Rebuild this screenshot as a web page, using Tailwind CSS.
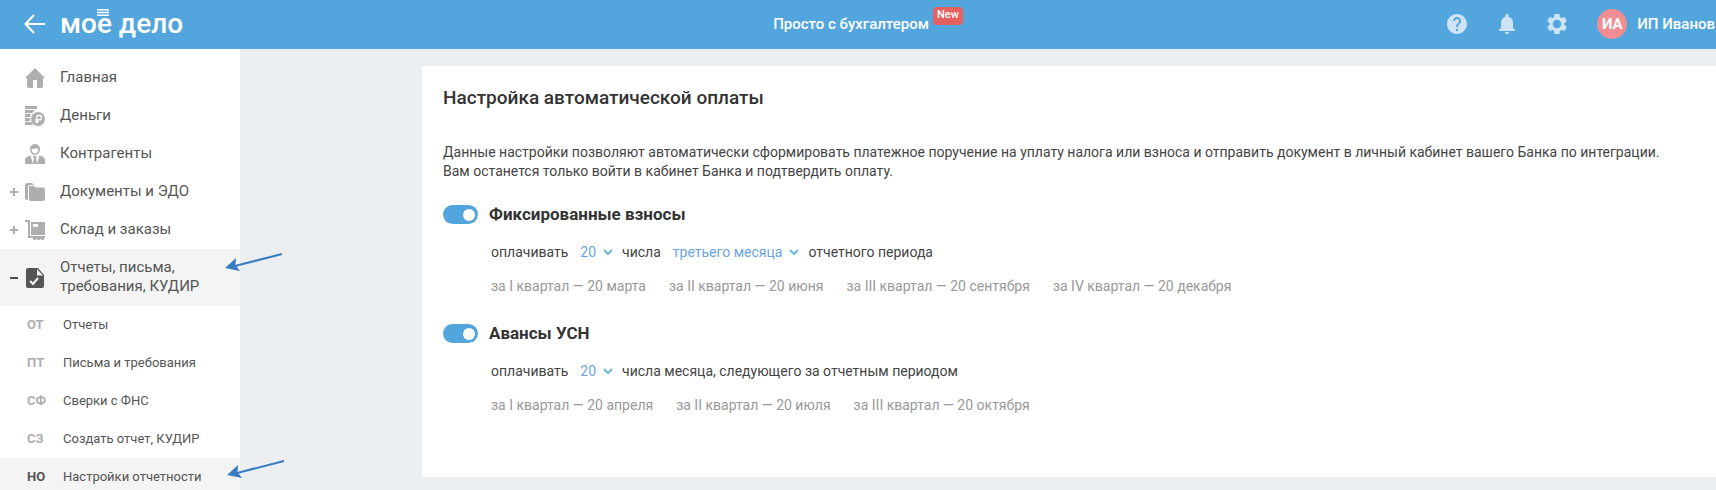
<!DOCTYPE html>
<html lang="ru">

<head>
  <meta charset="UTF-8">
  <meta name="viewport" content="width=device-width, initial-scale=1.0">
  <title>Настройка автоматической оплаты</title>
  <script src="https://cdn.jsdelivr.net/npm/@tailwindcss/browser@4"></script>
</head>

<body class="bg-[#ebeff2] font-[Roboto,'Liberation_Sans',sans-serif] text-[#333] h-screen flex flex-col overflow-hidden">
  <!-- Header -->
  <header class="bg-[#53a6dd] text-white h-[49px] pb-px shrink-0 grid grid-cols-[1fr_auto_1fr] items-center">
    <div class="flex items-center pl-6">
      <a href="#" aria-label="Назад">
        <svg class="w-6 h-6" viewBox="0 0 24 24" fill="none" stroke="currentColor" stroke-width="2"><path d="M21 12H2M10 3L1.500 12L10 21"/></svg>
      </a>
      <a href="#" class="relative ml-3 text-[28px] leading-8 font-medium whitespace-nowrap">
        мое дело
        <svg class="absolute left-[37px] top-px w-3 h-[7px]" viewBox="0 0 12 7" fill="currentColor"><path d="M0 0h12v1.600H0zM0 2.700h12v1.600H0zM0 5.400h12v1.600H0z"/></svg>
      </a>
    </div>
    <a href="#" class="flex items-center ml-5 text-[15px] font-medium whitespace-nowrap">
      Просто с бухгалтером
      <span class="ml-1 mb-4 h-[18px] px-1 rounded bg-[#e66060] text-[11px] leading-4">New</span>
    </a>
    <div class="flex items-center justify-end pr-px whitespace-nowrap">
      <button type="button" aria-label="Помощь" class="mr-[26px] text-[#cce4f5]">
        <svg class="w-6 h-6" viewBox="0 0 24 24" fill="currentColor"><path d="M12 2C6.480 2 2 6.480 2 12s4.480 10 10 10 10-4.480 10-10S17.520 2 12 2zm1 17h-2v-2h2v2zm2.070-7.750l-.9.920C13.450 12.900 13 13.500 13 15h-2v-.5c0-1.100.45-2.100 1.170-2.830l1.240-1.260c.37-.36.59-.86.59-1.410 0-1.100-.9-2-2-2s-2 .9-2 2H8c0-2.210 1.790-4 4-4s4 1.790 4 4c0 .88-.36 1.680-.93 2.250z"/></svg>
      </button>
      <button type="button" aria-label="Уведомления" class="mr-[26px] text-[#cce4f5]">
        <svg class="w-6 h-6" viewBox="0 0 24 24" fill="currentColor"><path d="M12 22c1.100 0 2-.9 2-2h-4c0 1.100.9 2 2 2zm6-6v-5c0-3.070-1.640-5.640-4.500-6.320V3.500C13.500 2.670 12.830 2 12 2s-1.500.67-1.500 1.500v1.180C7.630 5.360 6 7.920 6 11v5l-2 2v1h16v-1l-2-2z"/></svg>
      </button>
      <button type="button" aria-label="Настройки" class="mr-7 text-[#cce4f5]">
        <svg class="w-6 h-6" viewBox="0 0 24 24" fill="currentColor"><path d="M19.430 12.980c.04-.32.07-.64.07-.98s-.03-.66-.07-.98l2.110-1.650c.19-.15.24-.42.12-.64l-2-3.460c-.12-.22-.39-.3-.61-.22l-2.490 1c-.52-.4-1.080-.73-1.690-.98l-.38-2.650C14.460 2.180 14.250 2 14 2h-4c-.25 0-.46.18-.49.42l-.38 2.650c-.61.25-1.170.59-1.690.98l-2.490-1c-.23-.09-.49 0-.61.22l-2 3.460c-.13.22-.07.49.12.64l2.110 1.650c-.04.32-.07.65-.07.98s.03.66.07.98l-2.110 1.650c-.19.15-.24.42-.12.64l2 3.460c.12.22.39.3.61.22l2.490-1c.52.4 1.080.73 1.690.98l.38 2.650c.03.24.24.42.49.42h4c.25 0 .46-.18.49-.42l.38-2.650c.61-.25 1.170-.59 1.690-.98l2.490 1c.23.09.49 0 .61-.22l2-3.460c.12-.22.07-.49-.12-.64l-2.110-1.650zM12 16.200a4.200 4.200 0 1 1 0-8.400 4.200 4.200 0 0 1 0 8.400z"/></svg>
      </button>
      <a href="#" class="flex items-center gap-[10px] text-[15px] font-medium">
        <span class="w-[30px] h-[30px] rounded-full bg-[#f08e93] flex items-center justify-center font-bold">ИА</span>
        ИП Иванов
      </a>
    </div>
  </header>

  <div class="flex flex-1">
    <!-- Sidebar -->
    <nav class="w-60 shrink-0 bg-white pt-[10px] text-[15px] leading-[19px] text-[#555]">
      <ul>
        <li>
          <a href="#" class="flex items-center h-[38px] pl-[25px]">
            <svg class="w-5 h-5 mr-[15px] text-[#aeaeae]" viewBox="0 0 20 20" fill="currentColor"><path d="M10 0L0 10h2v8q0 2 2 2h4v-8h4v8h4q2 0 2-2v-8h2z"/></svg>
            <span class="pb-0.5">Главная</span>
          </a>
        </li>
        <li>
          <a href="#" class="flex items-center h-[38px] pl-[25px]">
            <svg class="w-5 h-5 mr-[15px] text-[#aeaeae]" viewBox="0 0 20 20" fill="currentColor">
              <path d="M0 0h12v3H0zM0 4h10L7 7H0zM0 8h6l-1 3H0zM0 12h5v3H0zM0 16h6l2 3H0z"/>
              <circle cx="13" cy="13" r="7"/>
              <path d="M12 17.500V9.500h2.200a2.200 2.200 0 0 1 0 4.400H10M10 15.700h4" fill="none" stroke="#fff" stroke-width="1.300"/>
            </svg>
            <span class="pb-0.5">Деньги</span>
          </a>
        </li>
        <li>
          <a href="#" class="flex items-center h-[38px] pl-[25px]">
            <svg class="w-5 h-5 mr-[15px] text-[#aeaeae]" viewBox="0 0 20 20" fill="currentColor">
              <path fill-rule="evenodd" d="M10 0a5 5 0 0 1 5 5c0 3-2 6-5 6S5 8 5 5a5 5 0 0 1 5-5zM6.500 5c0 2.500 1.500 4.500 3.500 4.500s3.500-2 3.500-4.500c-1 0-2-.5-2.500-1-1 1-3 1-4.500 1z"/>
              <path d="M0 20v-4c0-2 2-4 5.500-4.500L8 20zM20 20v-4c0-2-2-4-5.500-4.500L12 20zM8 12h4l-1 2 1 6H8l1-6z"/>
            </svg>
            <span class="pb-0.5">Контрагенты</span>
          </a>
        </li>
        <li>
          <a href="#" class="flex items-center h-[38px] pl-[10px]">
            <svg class="w-2 h-2 mr-[7px] text-[#aeaeae]" viewBox="0 0 8 8" fill="currentColor"><path d="M3 0h2v3h3v2H5v3H3V5H0V3h3z"/></svg>
            <svg class="w-5 h-5 mr-[15px] text-[#aeaeae]" viewBox="0 0 20 20" fill="currentColor"><path d="M0 3q0-2 2-2h5l2 2H5q-2 0-2 2v13Q0 18 0 16z"/><path d="M4 4h5l1.500 1.500H18q2 0 2 2V17q0 2-2 2H6q-2 0-2-2z"/></svg>
            <span class="pb-0.5">Документы и ЭДО</span>
          </a>
        </li>
        <li>
          <a href="#" class="flex items-center h-[38px] pl-[10px]">
            <svg class="w-2 h-2 mr-[7px] text-[#aeaeae]" viewBox="0 0 8 8" fill="currentColor"><path d="M3 0h2v3h3v2H5v3H3V5H0V3h3z"/></svg>
            <svg class="w-5 h-5 mr-[15px] text-[#aeaeae]" viewBox="0 0 20 20" fill="currentColor"><path d="M0 0h4q1 0 1 1v15h15v2h-1a1.500 1.500 0 0 1-3 1h-1a1.500 1.500 0 0 1-3 0H11a1.500 1.500 0 0 1-3-1H3V2H0z"/><path fill-rule="evenodd" d="M6 2h14v13H6zM8 4v3h5V4z"/></svg>
            <span class="pb-0.5">Склад и заказы</span>
          </a>
        </li>
        <li class="relative bg-[#f4f4f4]">
          <a href="#" class="flex items-center h-[57px] pl-[10px]">
            <svg class="w-2 h-2 mr-2 text-[#4d4d4d]" viewBox="0 0 8 8" fill="currentColor"><path d="M0 3h8v2H0z"/></svg>
            <svg class="w-[18px] h-5 mr-4 text-[#555]" viewBox="0 0 18 20" fill="currentColor"><path d="M2 0h10l6 7v11q0 2-2 2H2q-2 0-2-2V2q0-2 2-2z"/><path d="M11 1v6.500h6z" fill="#f4f4f4"/><path d="M4 13l3 3 5-6" fill="none" stroke="#f4f4f4" stroke-width="2"/></svg>
            <span class="pb-0.5">Отчеты, письма,<br>требования, КУДИР</span>
          </a>
          <svg class="absolute left-[225px] top-1 w-[58px] h-5" viewBox="0 0 58 20" fill="#3a7cc0"><path d="M10 13L57 1" stroke="#3a7cc0" stroke-width="2"/><path d="M0 15L11 5L10.500 12L15 18z"/></svg>
        </li>
      </ul>
      <ul class="text-[13px]">
        <li>
          <a href="#" class="flex items-center h-[38px] pl-[27px] pb-0.5"><b class="w-9 text-[#aeaeae]">ОТ</b>Отчеты</a>
        </li>
        <li>
          <a href="#" class="flex items-center h-[38px] pl-[27px] pb-0.5"><b class="w-9 text-[#aeaeae]">ПТ</b>Письма и требования</a>
        </li>
        <li>
          <a href="#" class="flex items-center h-[38px] pl-[27px] pb-0.5"><b class="w-9 text-[#aeaeae]">СФ</b>Сверки с ФНС</a>
        </li>
        <li>
          <a href="#" class="flex items-center h-[38px] pl-[27px] pb-0.5"><b class="w-9 text-[#aeaeae]">СЗ</b>Создать отчет, КУДИР</a>
        </li>
        <li class="relative bg-[#f4f4f4]">
          <a href="#" class="flex items-center h-[38px] pl-[27px] pb-0.5"><b class="w-9">НО</b>Настройки отчетности</a>
          <svg class="absolute left-[227px] top-[2px] w-[58px] h-5" viewBox="0 0 58 20" fill="#3a7cc0"><path d="M10 13L57 1" stroke="#3a7cc0" stroke-width="2"/><path d="M0 15L11 5L10.500 12L15 18z"/></svg>
        </li>
      </ul>
    </nav>

    <!-- Main Content -->
    <main class="flex-1 ml-[182px] mt-[17px] mb-auto bg-white px-[21px] pt-5 pb-[62px] text-[14px] leading-[19px]">
      <h1 class="text-[19px] leading-6 font-medium">Настройка автоматической оплаты</h1>
      <p class="mt-[33px] text-[#444]">Данные настройки позволяют автоматически сформировать платежное поручение на уплату налога или взноса и отправить документ в личный кабинет вашего Банка по интеграции.<br>Вам останется только войти в кабинет Банка и подтвердить оплату.</p>

      <form class="text-[#444]">
        <section class="mt-6">
          <div class="flex items-center gap-[11px]">
            <input type="checkbox" role="switch" id="fixed" checked class="appearance-none flex items-center justify-end w-[35px] h-[19px] pr-[3px] rounded-full bg-[#aeaeae] checked:bg-[#53a6dd] before:w-3 before:h-3 before:rounded-full before:bg-white">
            <label for="fixed" class="text-[17px] font-bold text-[#333]">Фиксированные взносы</label>
          </div>
          <div class="mt-[19px] ml-12 flex items-center">
            <label for="fixedDay">оплачивать</label>
            <span class="relative flex items-center ml-3 mr-[9px] text-[#6aa5e0]">
              <select id="fixedDay" class="appearance-none field-sizing-content pr-[17px]">
                <option>20</option>
              </select>
              <svg class="absolute right-0 w-[10px] h-[7px] pointer-events-none" viewBox="0 0 10 7" fill="none" stroke="#6cbbd8" stroke-width="2"><path d="M1 1l4 4 4-4"/></svg>
            </span>
            <label for="fixedMonth">числа</label>
            <span class="relative flex items-center ml-3 mr-[9px] text-[#6aa5e0]">
              <select id="fixedMonth" class="appearance-none field-sizing-content pr-[17px]">
                <option>третьего месяца</option>
              </select>
              <svg class="absolute right-0 w-[10px] h-[7px] pointer-events-none" viewBox="0 0 10 7" fill="none" stroke="#6cbbd8" stroke-width="2"><path d="M1 1l4 4 4-4"/></svg>
            </span>
            отчетного периода
          </div>
          <ul class="mt-[15px] ml-12 flex gap-[23px] text-[#999]">
            <li>за I квартал — 20 марта</li>
            <li>за II квартал — 20 июня</li>
            <li>за III квартал — 20 сентября</li>
            <li>за IV квартал — 20 декабря</li>
          </ul>
        </section>

        <section class="mt-7">
          <div class="flex items-center gap-[11px]">
            <input type="checkbox" role="switch" id="usn" checked class="appearance-none flex items-center justify-end w-[35px] h-[19px] pr-[3px] rounded-full bg-[#aeaeae] checked:bg-[#53a6dd] before:w-3 before:h-3 before:rounded-full before:bg-white">
            <label for="usn" class="text-[17px] font-bold text-[#333]">Авансы УСН</label>
          </div>
          <div class="mt-[19px] ml-12 flex items-center">
            <label for="usnDay">оплачивать</label>
            <span class="relative flex items-center ml-3 mr-[9px] text-[#6aa5e0]">
              <select id="usnDay" class="appearance-none field-sizing-content pr-[17px]">
                <option>20</option>
              </select>
              <svg class="absolute right-0 w-[10px] h-[7px] pointer-events-none" viewBox="0 0 10 7" fill="none" stroke="#6cbbd8" stroke-width="2"><path d="M1 1l4 4 4-4"/></svg>
            </span>
            числа месяца, следующего за отчетным периодом
          </div>
          <ul class="mt-[15px] ml-12 flex gap-[23px] text-[#999]">
            <li>за I квартал — 20 апреля</li>
            <li>за II квартал — 20 июля</li>
            <li>за III квартал — 20 октября</li>
          </ul>
        </section>
      </form>
    </main>
  </div>
</body>

</html>
